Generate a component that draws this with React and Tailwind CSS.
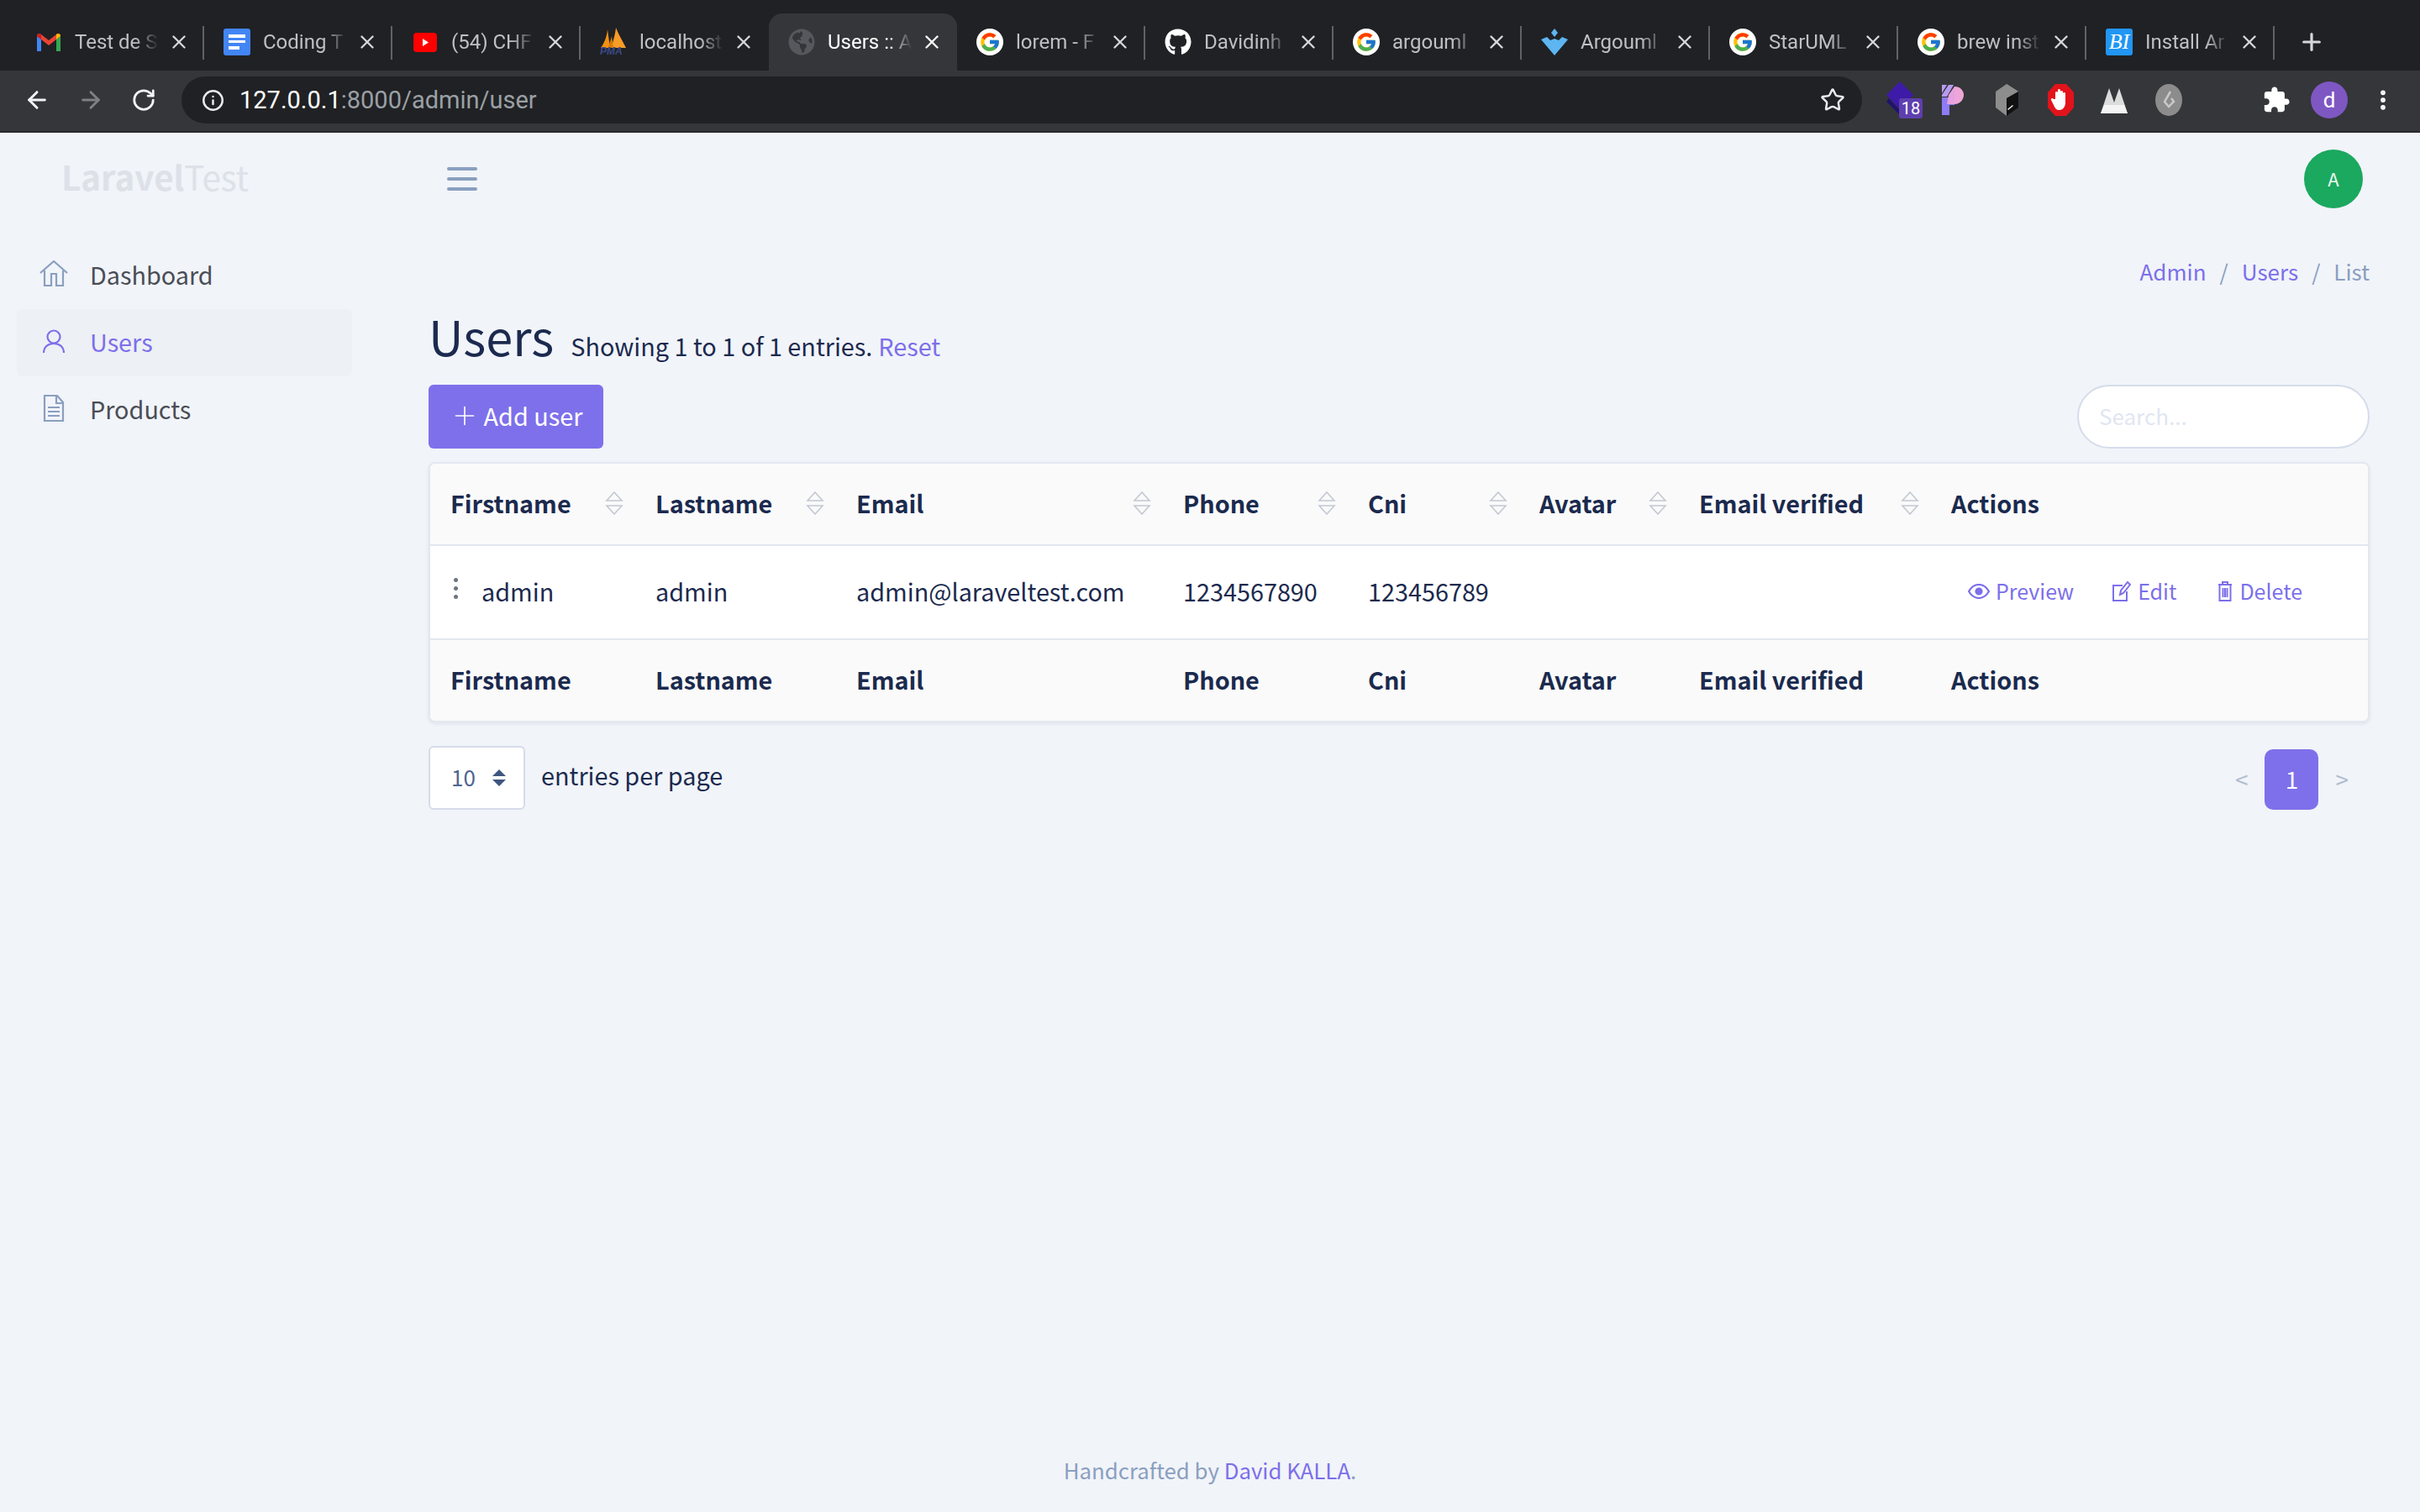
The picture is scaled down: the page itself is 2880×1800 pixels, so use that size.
import { ArrowLeft, ArrowRight, RotateCw, Info, Star, X, Plus, EllipsisVertical } from "lucide-react";
import { FcGoogle } from "react-icons/fc";
import { FaGithub, FaGlobeAmericas } from "react-icons/fa";

function Gmail() {
  return (
    <svg width="32" height="32" viewBox="0 0 32 32">
      <path d="M2 9v18h5V13z" fill="#4285f4" />
      <path d="M25 13v14h5V9z" fill="#34a853" />
      <path d="M2 9c0-3 3-4 5-2l9 7 9-7c2-2 5-1 5 2l-5 4-9 7-9-7z" fill="#ea4335" />
      <path d="M2 9l5 4V7C5 5 2 6 2 9z" fill="#c5221f" />
      <path d="M30 9l-5 4V7c2-2 5-1 5 2z" fill="#fbbc04" />
    </svg>
  );
}

function Docs() {
  return (
    <svg width="32" height="32" viewBox="0 0 32 32">
      <rect y="0" width="32" height="32" rx="3" fill="#4285f4" />
      <path d="M6 7h20v4H6zM6 14h20v3H6zM6 21h13v4H6z" fill="#fff" />
    </svg>
  );
}

function Youtube() {
  return (
    <svg width="32" height="32" viewBox="0 0 32 32">
      <rect x="2" y="5" width="28" height="23" rx="4" fill="#ff0000" />
      <path d="M13 12l7 4.5-7 4.5z" fill="#fff" />
    </svg>
  );
}

function Pma() {
  return (
    <span className="relative flex h-[34px] w-[32px]">
      <svg width="32" height="24" viewBox="0 0 32 24">
        <path d="M1 24C5 18 8 12 9 2c1 7 2 15 3 22z" fill="#f29111" />
        <path d="M14 24c1-8 4-14 5-24 3 8 8 16 12 24z" fill="#f89c28" />
        <path d="M10 24c1-6 3-9 4-14l2 14z" fill="#d97a00" />
      </svg>
      <span className="absolute bottom-0 left-0 font-['Liberation_Sans',sans-serif] text-[12px] leading-[11px] font-bold text-[#3b4a86] italic">
        PMA
      </span>
    </span>
  );
}

function Google() {
  return (
    <span className="flex h-[32px] w-[32px] items-center justify-center rounded-full bg-white">
      <FcGoogle size={26} />
    </span>
  );
}

function Github() {
  return <FaGithub size={32} color="#fff" />;
}

function Argo() {
  return (
    <svg width="32" height="32" viewBox="0 0 32 32">
      <path d="M16 0l4 5-4 5-4-5z" fill="#5db6f2" />
      <path d="M0 13l7-3 4 4 5-2 5 2 4-4 7 3-16 19z" fill="#5db6f2" />
    </svg>
  );
}

function Bi() {
  return (
    <span className="flex h-[32px] w-[32px] items-center justify-center rounded-[3px] bg-[#2196f3] font-['Liberation_Serif',serif] text-[26px] leading-none text-white italic">
      BI
    </span>
  );
}

const tabs = [
  { title: "Test de S", icon: <Gmail /> },
  { title: "Coding T", icon: <Docs /> },
  { title: "(54) CHF", icon: <Youtube /> },
  { title: "localhost", icon: <Pma /> },
  { title: "Users :: A", icon: <FaGlobeAmericas size={32} color="#55585d" />, active: true },
  { title: "lorem - F", icon: <Google /> },
  { title: "Davidinh", icon: <Github /> },
  { title: "argouml", icon: <Google /> },
  { title: "Argouml", icon: <Argo /> },
  { title: "StarUML", icon: <Google /> },
  { title: "brew inst", icon: <Google /> },
  { title: "Install Ar", icon: <Bi /> },
];

function Tab({ tab, hideLine }) {
  return (
    <div
      className={`relative flex h-[68px] w-[224px] shrink-0 items-center pl-[23px] ${
        tab.active ? "rounded-t-[16px] bg-[#35363a]" : ""
      }`}
    >
      <span className="flex w-[32px] items-center justify-center">{tab.icon}</span>
      <span
        className={`ml-[15px] w-[100px] overflow-hidden text-[24px] whitespace-nowrap [mask-image:linear-gradient(to_right,black_72%,transparent)] ${
          tab.active ? "text-white" : "text-[#bdc1c6]"
        }`}
      >
        {tab.title}
      </span>
      <X size={26} strokeWidth={2.2} className={`ml-[11px] ${tab.active ? "text-white" : "text-[#d5d7da]"}`} />
      {!hideLine && <span className="absolute top-[15px] right-0 h-[40px] w-[2px] bg-[#5f6368]" />}
    </div>
  );
}

function Extensions() {
  return (
    <div className="ml-[29px] flex items-center">
      <span className="relative h-[44px] w-[31px]">
        <svg width="32" height="44" viewBox="0 0 32 44">
          <path d="M16 0l16 16-16 17L0 16z" fill="#3d1aa8" />
          <path d="M3 20l13 14 8-8v14H16L0 24z" fill="#20146b" />
        </svg>
        <span className="absolute top-[20px] left-[15px] flex h-[24px] w-[28px] items-center justify-center rounded-[3px] bg-[#5e3fae] text-[20px] leading-none text-white">
          18
        </span>
      </span>
      <svg className="ml-[35px]" width="26" height="36" viewBox="0 0 26 36">
        <path d="M0 0h6L0 10zM8 0h6L6 14H0v-2z" fill="#b79bf0" />
        <path d="M15 2c7 0 11 5 11 10s-4 11-11 11z" fill="#eea6d8" />
        <path d="M0 15h15v9H9v12H0z" fill="#8f7cf5" />
        <path d="M8 12l7-10v21H6z" fill="#e6a2e0" />
      </svg>
      <svg className="ml-[38px]" width="27" height="38" viewBox="0 0 27 38">
        <path d="M13 0L27 9 13 17z" fill="#8d8d8d" />
        <path d="M13 0L0 9v19l13 10V17l14-8-3-2z" fill="#8d8d8d" />
        <path d="M13 17l14-8v19L13 38z" fill="#111" />
        <path d="M14 30l6-5 1 1-6 5z" fill="#eee" />
      </svg>
      <svg className="ml-[35px]" width="31" height="38" viewBox="0 0 31 38">
        <path d="M9 0h13l9 10v18l-9 10H9L0 28V10z" fill="#e3131b" />
        <path d="M9 18V10a1.6 1.6 0 0 1 3 0V7a1.6 1.6 0 0 1 3 0v2a1.6 1.6 0 0 1 3 0v2a1.6 1.6 0 0 1 3 0v11c0 5-3 9-7 9s-5-2-7-6l-3-6c-1-2 2-3 3-1z" fill="#fff" />
      </svg>
      <svg className="ml-[32px]" width="32" height="32" viewBox="0 0 32 32">
        <path d="M0 32L10 2l6 17 6-17 10 30z" fill="#dcdcdc" />
        <path d="M0 32l4-10h24l4 10z" fill="#f4f4f4" />
      </svg>
      <svg className="ml-[33px]" width="32" height="38" viewBox="0 0 32 38">
        <ellipse cx="16" cy="19" rx="16" ry="19" fill="#8c8c8c" />
        <path d="M18 9l-7 12 5 6 6-6-3-4" fill="none" stroke="#c9c9c9" strokeWidth="2.5" />
      </svg>
      <svg className="ml-[95px]" width="34" height="34" viewBox="0 0 24 24" fill="#fff">
        <path d="M20.5 11H19V7c0-1.1-.9-2-2-2h-4V3.5C13 2.12 11.88 1 10.5 1S8 2.12 8 3.5V5H4c-1.1 0-1.99.9-1.99 2v3.8H3.5c1.49 0 2.7 1.21 2.7 2.7s-1.21 2.7-2.7 2.7H2V20c0 1.1.9 2 2 2h3.8v-1.5c0-1.49 1.21-2.7 2.7-2.7 1.49 0 2.7 1.21 2.7 2.7V22H17c1.1 0 2-.9 2-2v-4h1.5c1.38 0 2.5-1.12 2.5-2.5S21.88 11 20.5 11z" />
      </svg>
      <span className="ml-[24px] flex h-[44px] w-[44px] items-center justify-center rounded-full bg-[#7e57c2] text-[26px] text-white">
        d
      </span>
      <EllipsisVertical size={30} strokeWidth={2.6} color="#fff" className="ml-[27px]" />
    </div>
  );
}

function ChromeBar() {
  return (
    <div className="font-['Roboto',sans-serif]">
      <div className="flex h-[84px] items-end bg-[#202124] pl-[19px]">
        {tabs.map((tab, i) => (
          <Tab key={i} tab={tab} hideLine={tab.active || tabs[i + 1]?.active} />
        ))}
        <Plus size={32} strokeWidth={2.4} color="#d5d7da" className="mb-[18px] ml-[28px]" />
      </div>
      <div className="flex h-[74px] items-center border-b-[2px] border-[#28292c] bg-[#35363a] pb-[2px] pl-[28px]">
        <ArrowLeft size={32} strokeWidth={2.2} color="#f1f3f4" />
        <ArrowRight size={32} strokeWidth={2.2} color="#7d8084" className="ml-[32px]" />
        <RotateCw size={30} strokeWidth={2.2} color="#f1f3f4" className="ml-[32px]" />
        <div className="ml-[30px] flex h-[56px] w-[2000px] items-center rounded-full bg-[#202124] pr-[20px] pl-[24px]">
          <Info size={27} strokeWidth={2.2} color="#e8eaed" />
          <span className="ml-[18px] pt-[2px] text-[29px] text-white">
            127.0.0.1<span className="text-[#9aa0a6]">:8000/admin/user</span>
          </span>
          <Star size={30} strokeWidth={2} color="#e8eaed" className="ml-auto" />
        </div>
        <Extensions />
      </div>
    </div>
  );
}

function HomeIcon() {
  return (
    <svg width="34" height="32" viewBox="0 0 34 32" fill="none" stroke="#8a9fc0" strokeWidth="2.2">
      <path d="M1 15L17 1l16 14M6 12v18h8V16h6v14h8V12" />
    </svg>
  );
}

function UserIcon() {
  return (
    <svg width="26" height="28" viewBox="0 0 26 28" fill="none" stroke="#7c6fea" strokeWidth="2.2">
      <circle cx="13" cy="9" r="7.5" />
      <path d="M1 28c0-7 5-11 12-11s12 4 12 11" />
    </svg>
  );
}

function DocIcon() {
  return (
    <svg width="26" height="32" viewBox="0 0 26 32" fill="none" stroke="#8a9fc0" strokeWidth="2.2">
      <path d="M2 1h15l7 8v22H2zM16 1v9h8M6 15h14M6 20h14M6 25h14" />
    </svg>
  );
}

function NavItem({ icon, label, active }) {
  return (
    <div className={`mx-[20px] flex h-[80px] w-[399px] items-center rounded-[6px] pl-[27px] ${active ? "bg-[#edf0f5]" : ""}`}>
      <span className="mb-[4px] flex w-[34px] items-center justify-center">{icon}</span>
      <span className={`mb-[2px] ml-[26px] text-[28.8px] ${active ? "text-[#7c6fea]" : "text-[#4a4d55]"}`}>{label}</span>
    </div>
  );
}

function SortIcon() {
  return (
    <svg width="22" height="28" viewBox="0 0 22 28" fill="none" stroke="#c3c8d4" strokeWidth="1.6">
      <path d="M11 1l9 10H2zM11 27l9-10H2z" />
    </svg>
  );
}

const columns = [
  { label: "Firstname", w: "w-[244px]", sort: true },
  { label: "Lastname", w: "w-[239px]", sort: true },
  { label: "Email", w: "w-[389px]", sort: true },
  { label: "Phone", w: "w-[220px]", sort: true },
  { label: "Cni", w: "w-[204px]", sort: true },
  { label: "Avatar", w: "w-[190px]", sort: true },
  { label: "Email verified", w: "w-[300px]", sort: true },
  { label: "Actions", w: "", sort: false },
];

function ActionLink({ icon, label, className }) {
  return (
    <span className={`flex items-center text-[25px] text-[#7c6fea] ${className}`}>
      {icon}
      {label}
    </span>
  );
}

function Table() {
  return (
    <div className="mt-[16px] overflow-hidden rounded-[8px] border-[2px] border-[#e2e8f0] bg-white shadow-[0_2px_4px_rgba(30,40,70,0.08)]">
      <table className="w-full table-fixed border-collapse text-left text-[#1b2a4e]">
        <thead>
          <tr className="h-[97px] border-b-[2px] border-[#e2e8f0] bg-[#fafafa]">
            {columns.map((col) => (
              <th key={col.label} className={`pb-[3px] pl-[24px] text-[28.8px] font-bold ${col.w}`}>
                <div className="flex items-center justify-between pr-[14px] whitespace-nowrap">
                  {col.label}
                  {col.sort && <SortIcon />}
                </div>
              </th>
            ))}
          </tr>
        </thead>
        <tbody>
          <tr className="h-[112px] border-b-[2px] border-[#e2e8f0] text-[28.8px]">
            <td className="pb-[3px] pl-[24px]">
              <div className="flex items-center">
                <span className="mb-[6px] flex w-[12px] flex-col items-center gap-[5px]">
                  <i className="h-[5px] w-[5px] rounded-full bg-[#6e7480]" />
                  <i className="h-[5px] w-[5px] rounded-full bg-[#6e7480]" />
                  <i className="h-[5px] w-[5px] rounded-full bg-[#6e7480]" />
                </span>
                <span className="ml-[25px]">admin</span>
              </div>
            </td>
            <td className="pb-[3px] pl-[24px]">admin</td>
            <td className="pb-[3px] pl-[24px]">admin@laraveltest.com</td>
            <td className="pb-[3px] pl-[24px]">1234567890</td>
            <td className="pb-[3px] pl-[24px]">123456789</td>
            <td></td>
            <td></td>
            <td className="pb-[3px] pl-[44px]">
              <div className="flex items-center">
                <ActionLink
                  label="Preview"
                  icon={
                    <svg className="mr-[7px]" width="26" height="18" viewBox="0 0 26 18" fill="none" stroke="#7c6fea" strokeWidth="2.2">
                      <path d="M1 9c3-5 7-8 12-8s9 3 12 8c-3 5-7 8-12 8S4 14 1 9z" />
                      <circle cx="13" cy="9" r="3.5" fill="#7c6fea" />
                    </svg>
                  }
                />
                <ActionLink
                  label="Edit"
                  className="ml-[46px]"
                  icon={
                    <svg className="mr-[8px]" width="22" height="24" viewBox="0 0 22 24" fill="none" stroke="#7c6fea" strokeWidth="2">
                      <path d="M12 5H1v18h16V12M9 16l1-5 8-10 3 3-8 10z" />
                    </svg>
                  }
                />
                <ActionLink
                  label="Delete"
                  className="ml-[49px]"
                  icon={
                    <svg className="mr-[8px]" width="18" height="24" viewBox="0 0 18 24" fill="none" stroke="#7c6fea" strokeWidth="2">
                      <path d="M1 4h16M6 4V1h6v3M2.5 4v19h13V4M6.5 8v11M9 8v11M11.5 8v11" />
                    </svg>
                  }
                />
              </div>
            </td>
          </tr>
        </tbody>
        <tfoot>
          <tr className="h-[97px] bg-[#fafafa]">
            {columns.map((col) => (
              <th key={col.label} className="pb-[3px] pl-[24px] text-[28.8px] font-bold whitespace-nowrap">
                {col.label}
              </th>
            ))}
          </tr>
        </tfoot>
      </table>
    </div>
  );
}

export default function App() {
  return (
    <div className="flex min-h-[1800px] w-[2880px] flex-col bg-[#f1f4f9] font-['Noto_Sans_CJK_SC','Liberation_Sans',sans-serif] text-[#1b2a4e]">
      <ChromeBar />

      <div className="flex flex-1">
        {/* Sidebar */}
        <aside className="w-[440px] shrink-0">
          <div className="flex h-[110px] items-center pb-[6px] pl-[73px] text-[40.3px] leading-none text-[#dde1e8]">
            <span className="font-bold">Laravel</span>
            <span>Test</span>
          </div>
          <nav className="mt-[10px] pt-[10px]">
            <NavItem icon={<HomeIcon />} label="Dashboard" />
            <NavItem icon={<UserIcon />} label="Users" active />
            <NavItem icon={<DocIcon />} label="Products" />
          </nav>
        </aside>

        {/* Main */}
        <main className="flex-1 pr-[60px] pl-[70px]">
          <header className="flex h-[110px] items-center justify-between">
            <div className="ml-[22px] flex w-[36px] flex-col gap-[8px]">
              <span className="h-[4px] rounded-full bg-[#8a9fc0]" />
              <span className="h-[4px] rounded-full bg-[#8a9fc0]" />
              <span className="h-[4px] rounded-full bg-[#8a9fc0]" />
            </div>
            <div className="mr-[8px] flex h-[70px] w-[70px] items-center justify-center rounded-full bg-[#1ba85f] pb-[2px] text-[22px] text-[#e9f7ef]">
              A
            </div>
          </header>

          <div className="mt-[35px] flex items-center justify-end text-[26px] leading-[40px] text-[#8a9fc0]">
            <span className="text-[#7c6fea]">Admin</span>
            <span className="mx-[16px]">/</span>
            <span className="text-[#7c6fea]">Users</span>
            <span className="mx-[16px]">/</span>
            <span>List</span>
          </div>

          <div className="mt-[14px] flex items-baseline">
            <h1 className="text-[57.6px] leading-[84px]">Users</h1>
            <span className="ml-[20px] text-[28.8px]">Showing 1 to 1 of 1 entries.</span>
            <span className="ml-[7px] text-[28.8px] text-[#7c6fea]">Reset</span>
          </div>

          <div className="mt-[17px] flex items-center justify-between">
            <button className="flex h-[76px] w-[208px] items-center justify-center rounded-[6px] bg-[#7e70ea] pb-[2px] text-[28.8px] text-white">
              <Plus size={36} strokeWidth={1.1} className="mr-[5px]" />
              Add user
            </button>
            <input
              placeholder="Search..."
              className="h-[76px] w-[348px] rounded-full border-[2px] border-[#d5dcea] bg-white px-[24px] pb-[4px] text-[26px] outline-none placeholder:text-[#dfe6f2]"
            />
          </div>

          <Table />

          <div className="mt-[28px] flex items-center">
            <div className="flex h-[76px] w-[115px] items-center rounded-[6px] border-[2px] border-[#d5dcea] bg-white pb-[4px] pl-[25px] text-[#4e6690]">
              <span className="text-[26px]">10</span>
              <svg className="mt-[4px] ml-[20px]" width="16" height="20" viewBox="0 0 16 20" fill="#3f5680">
                <path d="M8 0l8 8H0zM8 20l8-8H0z" />
              </svg>
            </div>
            <span className="mb-[6px] ml-[19px] text-[28.8px]">entries per page</span>
            <div className="mt-[3px] ml-auto flex items-center text-[28px] text-[#b0bdd0]">
              <span className="mr-[20px] pb-[2px]">&lt;</span>
              <span className="flex h-[72px] w-[64px] items-center justify-center rounded-[10px] bg-[#7e70ea] pb-[2px] text-white">1</span>
              <span className="mr-[25px] ml-[20px] pb-[2px]">&gt;</span>
            </div>
          </div>
        </main>
      </div>

      <footer className="pb-[30px] text-center text-[25.8px] leading-[40px] text-[#8a9fc0]">
        Handcrafted by <span className="text-[#7c6fea]">David KALLA</span>.
      </footer>
    </div>
  );
}
